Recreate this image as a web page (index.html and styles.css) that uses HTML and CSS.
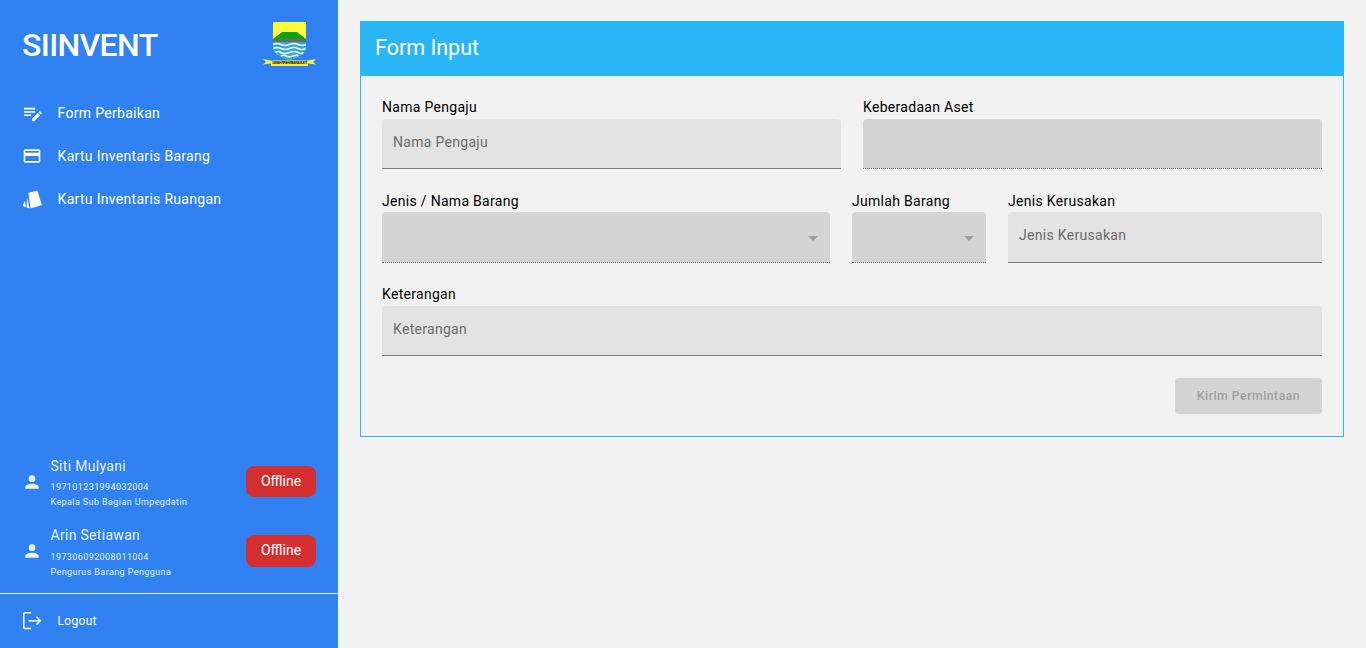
FILE: index.html
```html
<!DOCTYPE html>
<html lang="id">
<head>
<meta charset="utf-8">
<title>SIINVENT</title>
<link rel="stylesheet" href="styles.css">
</head>
<body>
<div class="app">
  <aside class="sidebar">
    <div class="brand">
      <div class="brand-name">SIINVENT</div>
      <svg class="logo" width="54" height="46" viewBox="0 0 54 46">
        <path d="M10 1H43V25Q43 34 26.500 39Q10 34 10 25Z" fill="#fdfb36"/>
        <path d="M10 18L19 11H34L43 18V19H10Z" fill="#0ca60c"/>
        <rect x="10" y="18" width="33" height="3" fill="#6a6a6a"/>
        <path d="M10 21H43V25Q43 34 26.500 39Q10 34 10 25Z" fill="#2aa8e6"/>
        <path d="M10 23.500Q14 21.500 18 23.500T26.500 23.500T35 23.500T43 23.500M10.500 27.500Q14 25.500 18 27.500T26.500 27.500T35 27.500T42.500 27.500M12.500 31.500Q15 29.500 18 31.500T26.500 31.500T35 31.500T40.500 31.500M18 35Q20.500 33.500 23 35T30 35T35 35" fill="none" stroke="#fff" stroke-width="1.600"/>
        <path d="M0 38L8 39.500H45L53 38L50 41L53 43.500L45 42.500V45H8V42.500L0 43.500L3 41Z" fill="#f7ee48"/>
        <text class="logo-motto" x="26.500" y="42.500" text-anchor="middle" textLength="35">GEMAH RIPAH WIBAWA MUKTI</text>
      </svg>
    </div>
    <nav class="nav">
      <a class="nav-item">
        <svg class="nav-icon" viewBox="0 0 24 24"><path d="M2.400 5.800h13.400v1.900H2.400zM2.400 9.800h13.400v1.900H2.400zM2.400 13.800h8.600v1.900H2.400zM12 21.800v-2.700l7-7 2.700 2.700-7 7zM19.900 11.200l1-1a.7.700 0 0 1 1 0l1.700 1.700a.7.700 0 0 1 0 1l-1 1z" fill="#fff"/></svg>
        <span>Form Perbaikan</span>
      </a>
      <a class="nav-item">
        <svg class="nav-icon" viewBox="0 0 24 24"><path d="M20 4H4c-1.110 0-2 .89-2 2v12c0 1.110.89 2 2 2h16c1.110 0 2-.89 2-2V6c0-1.110-.89-2-2-2zm0 14H4v-6h16v6zm0-10H4V6h16v2z" fill="#fff"/></svg>
        <span>Kartu Inventaris Barang</span>
      </a>
      <a class="nav-item">
        <svg class="nav-icon" viewBox="0 0 24 24"><path d="M8.500 5.200L18 2.800L22.800 18.800L11 22.400Z" fill="#fff" stroke="#fff" stroke-width="1.600" stroke-linejoin="round"/><path d="M6 9.800L9.200 23.300L5.500 22.300Z" fill="#fff"/><path d="M3.500 14.200L4.700 22L1.300 20.400Q.8 20 1 19.400Z" fill="#fff"/></svg>
        <span>Kartu Inventaris Ruangan</span>
      </a>
    </nav>
    <div class="users">
      <div class="user">
        <svg class="user-icon" viewBox="0 0 24 24"><path d="M12 4a4 4 0 0 1 4 4 4 4 0 0 1-4 4 4 4 0 0 1-4-4 4 4 0 0 1 4-4m0 10c4.420 0 8 1.790 8 4v2H4v-2c0-2.210 3.580-4 8-4z" fill="#fff" fill-opacity=".9"/></svg>
        <div class="user-info">
          <div class="user-name">Siti Mulyani</div>
          <div class="user-id">197101231994032004</div>
          <div class="user-role">Kepala Sub Bagian Umpegdatin</div>
        </div>
        <button class="status" type="button">Offline</button>
      </div>
      <div class="user">
        <svg class="user-icon" viewBox="0 0 24 24"><path d="M12 4a4 4 0 0 1 4 4 4 4 0 0 1-4 4 4 4 0 0 1-4-4 4 4 0 0 1 4-4m0 10c4.420 0 8 1.790 8 4v2H4v-2c0-2.210 3.580-4 8-4z" fill="#fff" fill-opacity=".9"/></svg>
        <div class="user-info">
          <div class="user-name">Arin Setiawan</div>
          <div class="user-id">197306092008011004</div>
          <div class="user-role">Pengurus Barang Pengguna</div>
        </div>
        <button class="status" type="button">Offline</button>
      </div>
    </div>
    <a class="logout">
      <svg class="nav-icon" viewBox="0 0 24 24"><path d="M11 2.200H3.600a1.500 1.500 0 0 0-1.500 1.500v15.800a1.500 1.500 0 0 0 1.500 1.500H11M8 11.600H22M17.400 7L22 11.600L17.400 16.200" fill="none" stroke="#fff" stroke-width="1.800"/></svg>
      <span>Logout</span>
    </a>
  </aside>
  <main class="main">
    <section class="card">
      <header class="card-head">Form Input</header>
      <form class="form">
        <div class="row row-two">
          <label class="field"><span class="label">Nama Pengaju</span><span class="box"><input class="input" placeholder="Nama Pengaju"></span></label>
          <label class="field"><span class="label">Keberadaan Aset</span><span class="box box-off"><input class="input" disabled></span></label>
        </div>
        <div class="row row-three">
          <label class="field"><span class="label">Jenis / Nama Barang</span><span class="box box-off box-select"><input class="input" disabled></span></label>
          <label class="field"><span class="label">Jumlah Barang</span><span class="box box-off box-select"><input class="input" disabled></span></label>
          <label class="field"><span class="label">Jenis Kerusakan</span><span class="box"><input class="input" placeholder="Jenis Kerusakan"></span></label>
        </div>
        <div class="row">
          <label class="field"><span class="label">Keterangan</span><span class="box"><input class="input" placeholder="Keterangan"></span></label>
        </div>
        <div class="actions"><button class="submit" type="button" disabled>Kirim Permintaan</button></div>
      </form>
    </section>
  </main>
</div>
</body>
</html>
```
FILE: styles.css
```css
* { box-sizing: border-box; }
html, body { margin: 0; height: 100%; overflow: hidden; }
body { font-family: Roboto, "Liberation Sans", sans-serif; background: #f2f2f2; color: #000; }
.app { display: flex; height: 648px; }

.sidebar { width: 338px; flex: none; display: flex; flex-direction: column; background: #3082f3; color: #fff; }
.brand { height: 91px; display: flex; align-items: flex-start; justify-content: space-between; padding: 21px 22px 0; }
.brand-name { font-size: 32px; line-height: 48px; font-weight: 500; letter-spacing: -.65px; }
.logo { display: block; margin: 0 -1px 0 0; }
.logo-motto { font: 700 3px "Liberation Sans", sans-serif; fill: #222; }

.nav { display: flex; flex-direction: column; }
.nav-item { height: 43px; display: flex; align-items: center; padding-left: 22px; font-size: 14px; letter-spacing: .3px; color: #fff; }
.nav-icon { width: 20px; height: 20px; margin-right: 15.600px; flex: none; }

.users { margin-top: auto; display: flex; flex-direction: column; gap: 8.500px; padding: 0 22px 11.500px 22px; }
.user { height: 61px; display: flex; align-items: center; }
.user-icon { width: 20px; height: 20px; flex: none; margin-right: 8.500px; }
.user-info { flex: 1; padding-top: 3px; color: rgba(255,255,255,.9); }
.user-name { font-size: 14px; line-height: 20px; letter-spacing: .3px; }
.user-id { margin-top: 4.500px; }
.user-id, .user-role { font-size: 9px; line-height: 15px; letter-spacing: .4px; font-weight: 400; }
.status { width: 70px; height: 31.500px; border: 0; border-radius: 8px; background: #d32f2f; color: #fff; font: 400 14px Roboto, sans-serif; padding: 0 0 2px; }

.logout { height: 55px; flex: none; display: flex; align-items: center; padding-left: 22px; border-top: 1px solid #fff; font-size: 12px; letter-spacing: .3px; }

.main { flex: 1; padding: 21px 22px; }
.card { height: 416px; border: 1px solid #29b6f6; border-top: 0; }
.card-head { height: 55px; margin: 0 -1px; padding: 0 15px 2px; display: flex; align-items: center; background: #29b6f6; color: #fff; font-size: 21.500px; }
.form { padding: 20px 21px 0; display: flex; flex-direction: column; gap: 20.400px; }
.row { display: grid; grid-template-columns: 1fr; column-gap: 22px; }
.row-two { grid-template-columns: 1fr 1fr; }
.row-three { grid-template-columns: 448px 134px 1fr; }
.row-three .box { height: 50.600px; }
.row-three .label { line-height: 24.400px; }
.field { display: flex; flex-direction: column; }
.label { font-size: 14px; line-height: 23px; letter-spacing: .3px; height: 23px; }
.box { position: relative; display: block; height: 50px; background: #e3e3e3; border-radius: 4px 4px 0 0; border-bottom: 1px solid #7c7c7c; }
.box-off { background: #d4d4d4; border-bottom: 1px dotted #6e6e6e; }
.box-select::after { content: ""; position: absolute; right: 12px; top: 24px; border: 5px solid transparent; border-top-color: #9e9e9e; border-bottom: 0; }
.input { width: 100%; height: 100%; padding: 0 11px 4px; border: 0; background: none; outline: 0; font: 400 14px Roboto, sans-serif; letter-spacing: .3px; color: #000; }
.input::placeholder { color: #6b6b6b; opacity: 1; }
.actions { display: flex; justify-content: flex-end; margin-top: 1.200px; }
.submit { width: 147px; height: 36px; border: 0; border-radius: 4px; background: #d4d4d4; color: #a0a0a0; font: 500 12.250px Roboto, sans-serif; letter-spacing: .5px; padding: 0; }
```
